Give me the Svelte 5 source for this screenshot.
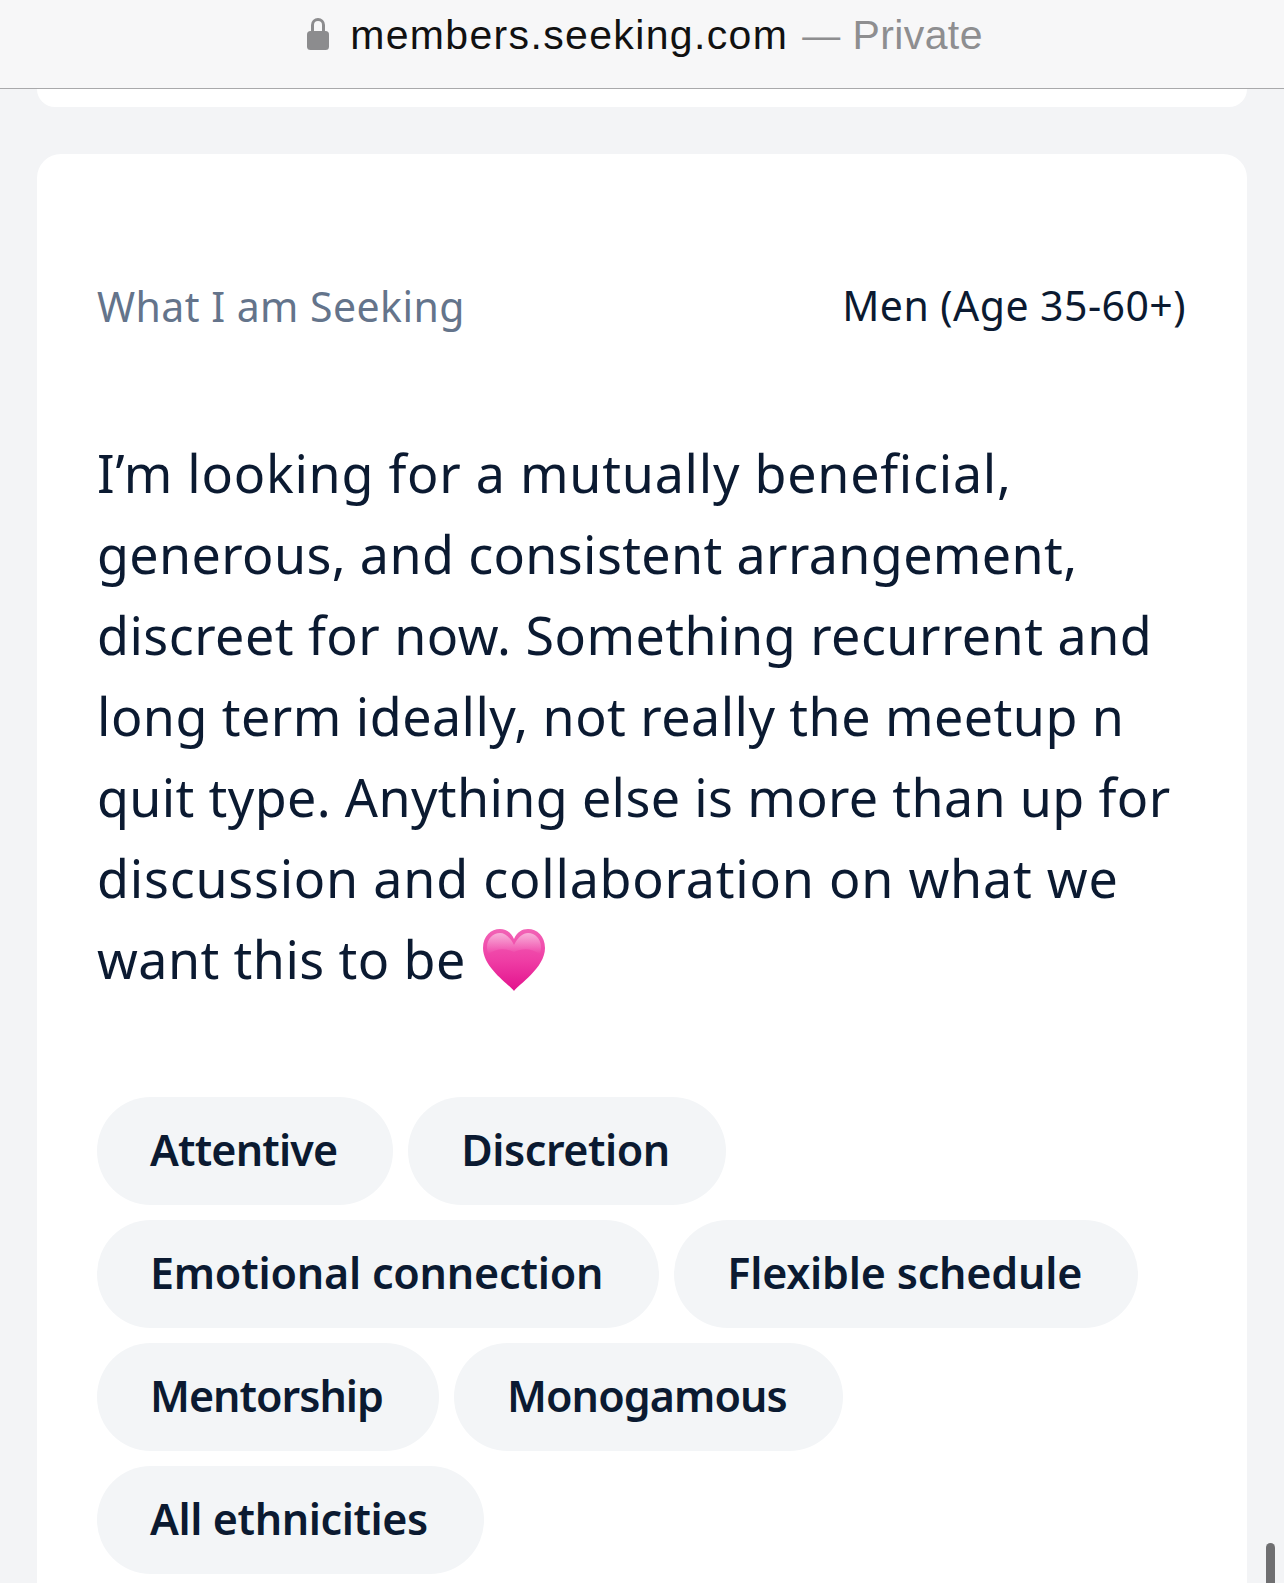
<script>
  const lines = [
    { text: 'I’m looking for a mutually beneficial,', ls: 0.75 },
    { text: 'generous, and consistent arrangement,', ls: 0.37 },
    { text: 'discreet for now. Something recurrent and', ls: 0.48 },
    { text: 'long term ideally, not really the meetup n', ls: 0.46 },
    { text: 'quit type. Anything else is more than up for', ls: 0.36 },
    { text: 'discussion and collaboration on what we', ls: 0.78 }
  ];
  const tagRows = [
    [{ text: 'Attentive', ls: -0.82 }, { text: 'Discretion', ls: -0.45 }],
    [{ text: 'Emotional connection', ls: -0.2 }, { text: 'Flexible schedule', ls: -0.2 }],
    [{ text: 'Mentorship', ls: -1 }, { text: 'Monogamous', ls: -0.9 }],
    [{ text: 'All ethnicities', ls: -0.4 }]
  ];
</script>

<div class="page">
  <header class="bar">
    <svg class="lock" viewBox="0 0 24 34" aria-hidden="true">
      <path d="M6.5 16V8a5.5 5.5 0 0 1 11 0v8" fill="none" stroke="#8c8c8e" stroke-width="3"/>
      <rect x="1" y="14" width="22" height="19" rx="3.5" fill="#8c8c8e"/>
    </svg>
    <span class="host">members.seeking.com</span>
    <span class="private"><span class="dash">—</span> Private</span>
  </header>

  <main class="content">
    <div class="prev"></div>
    <section class="card">
      <div class="head">
        <span class="label">What I am Seeking</span>
        <span class="value">Men (Age 35-60+)</span>
      </div>
      <p class="text">
        {#each lines as line}
          <span class="line" style="letter-spacing: {line.ls}px">{line.text}</span>
        {/each}
        <span class="line last">want this to be
          <svg class="heart" viewBox="0 0 64 64" aria-hidden="true">
            <defs>
              <linearGradient id="hg" x1="0" y1="0" x2="0" y2="1">
                <stop offset="0" stop-color="#f263b6"/>
                <stop offset="0.5" stop-color="#ef3ea5"/>
                <stop offset="1" stop-color="#e3128d"/>
              </linearGradient>
              <linearGradient id="hs" x1="0" y1="0" x2="0" y2="1">
                <stop offset="0" stop-color="#ffffff" stop-opacity="0.5"/>
                <stop offset="1" stop-color="#ffffff" stop-opacity="0"/>
              </linearGradient>
            </defs>
            <path d="M32 63C28 57 1 40 1 20 1 8 9 1 18 1c6 0 11 3 14 10 3-7 8-10 14-10 9 0 17 7 17 19 0 20-27 37-31 43z" fill="url(#hg)"/>
            <path d="M32 17C28 9 23 5 18 5 11 5 5 11 5 19c0 3 .6 5 1.500 7C14 20 24 20 32 24c8-4 18-4 25.500 2 .9-2 1.500-4 1.500-7 0-8-6-14-13-14-5 0-10 4-14 12z" fill="url(#hs)"/>
          </svg>
        </span>
      </p>
      <div class="tags">
        {#each tagRows as row}
          <div class="row">
            {#each row as tag}
              <span class="tag" style="letter-spacing: {tag.ls}px">{tag.text}</span>
            {/each}
          </div>
        {/each}
      </div>
    </section>
  </main>
  <div class="scroll"></div>
</div>

<style>
  :global(body) { margin: 0; background: #f3f4f6; }
  .page {
    position: relative;
    width: 1284px;
    height: 1583px;
    overflow: hidden;
    background: #f3f4f6;
    font-family: "Noto Sans", sans-serif;
    color: #0b1a31;
  }
  .bar {
    box-sizing: border-box;
    height: 89px;
    background: #f7f7f8;
    border-bottom: 1px solid #a9a9ab;
    display: flex;
    align-items: center;
    justify-content: center;
    gap: 14px;
    padding: 0 0 17px 5px;
    font-family: "Liberation Sans", sans-serif;
    font-size: 41px;
  }
  .lock { width: 24px; height: 34px; margin-top: -3px; margin-right: 6px; }
  .host { color: #111; letter-spacing: 1.35px; }
  .private { color: #8e8e90; letter-spacing: 0.4px; }
  .dash { font-size: 38px; }
  .content { padding: 0 37px; }
  .prev {
    height: 18px;
    background: #fff;
    border-radius: 0 0 20px 20px;
  }
  .card {
    margin-top: 47px;
    background: #fff;
    border-radius: 24px 24px 0 0;
    padding: 122px 60px 0;
    height: 1400px;
  }
  .head {
    display: flex;
    justify-content: space-between;
    align-items: center;
    font-size: 41px;
    line-height: 54px;
    letter-spacing: 0.45px;
  }
  .label { color: #64748b; margin-top: 3px; }
  .value { margin-right: 1px; }
  .text {
    margin: 99px 0 0;
    font-size: 52px;
    line-height: 81px;
  }
  .line { display: block; white-space: nowrap; }
  .last { letter-spacing: 0.43px; }
  .heart {
    width: 64px;
    height: 64px;
    vertical-align: -13px;
    margin-left: 2px;
  }
  .tags {
    margin-top: 98px;
    display: flex;
    flex-direction: column;
    gap: 15px;
  }
  .row { display: flex; gap: 15px; }
  .tag {
    height: 108px;
    line-height: 106px;
    padding: 0 56px 0 53px;
    border-radius: 54px;
    background: #f3f5f7;
    font-size: 43px;
    font-weight: 600;
    white-space: nowrap;
  }
  .scroll {
    position: absolute;
    left: 1266px;
    top: 1543px;
    width: 9px;
    height: 60px;
    border-radius: 5px;
    background: #6f6f71;
  }
</style>
